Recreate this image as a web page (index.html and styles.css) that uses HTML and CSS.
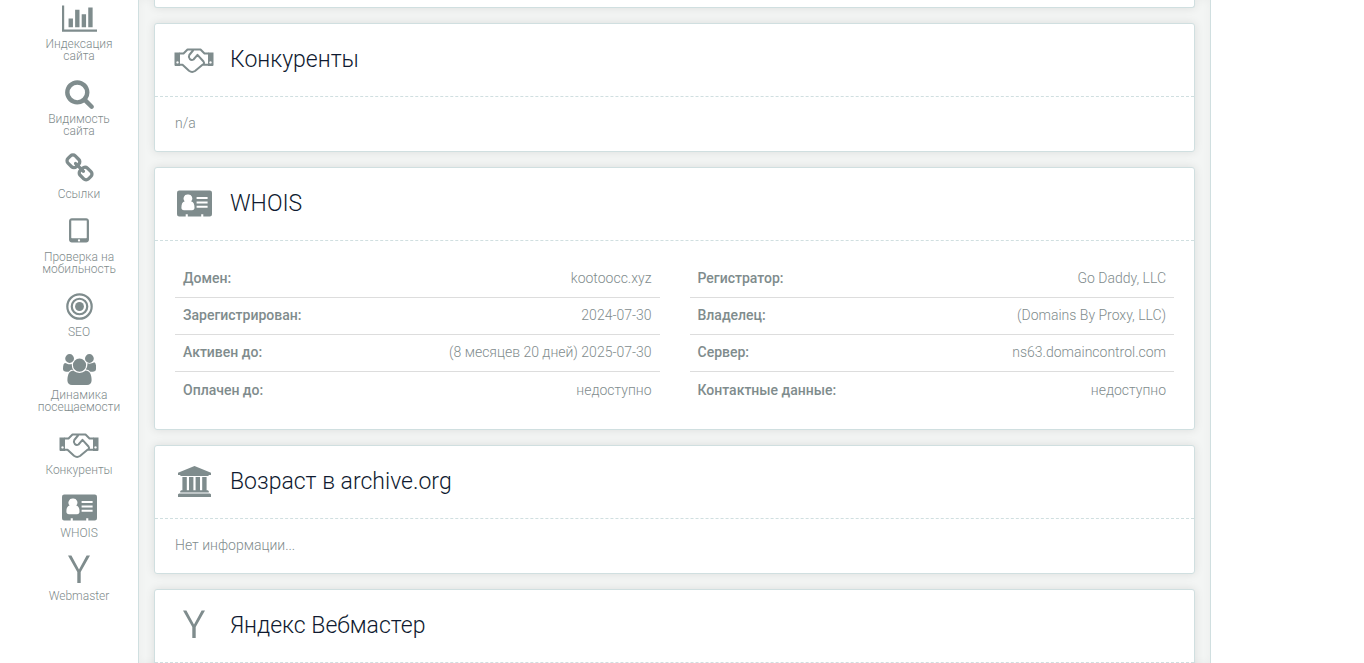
FILE: index.html
```html
<!DOCTYPE html>
<html lang="ru">
<head>
<meta charset="utf-8">
<title>WHOIS</title>
<link rel="stylesheet" href="styles.css">
</head>
<body>
<svg class="sprite" aria-hidden="true">
  <symbol id="i-chart" viewBox="0 0 2048 1792"><path d="M640 896v512h-256v-512h256zm384-512v1024h-256v-1024h256zm1024 1152v128h-2048v-1536h128v1408h1920zm-640-896v768h-256v-768h256zm384-384v1152h-256v-1152h256z"/></symbol>
  <symbol id="i-search" viewBox="64 0 1664 1792"><path d="M1216 832q0-185-131.5-316.5t-316.5-131.5-316.5 131.5-131.5 316.5 131.5 316.5 316.5 131.5 316.5-131.5 131.5-316.5zm512 832q0 52-38 90t-90 38q-54 0-90-38l-343-342q-179 124-399 124-143 0-273.5-55.5t-225-150-150-225-55.5-273.5 55.5-273.5 150-225 225-150 273.5-55.5 273.5 55.5 225 150 150 225 55.5 273.5q0 220-124 399l343 343q37 37 37 90z"/></symbol>
  <symbol id="i-chain" viewBox="64 0 1664 1792"><path d="M1520 1216q0-40-28-68l-208-208q-28-28-68-28-42 0-72 32 3 3 19 18.500t21.500 21.500 15 19 13 25.500 3.500 27.500q0 40-28 68t-68 28q-15 0-27.500-3.500t-25.500-13-19-15-21.500-21.500-18.500-19q-33 31-33 73 0 40 28 68l206 207q27 27 68 27 40 0 68-26l147-146q28-28 28-67zm-703-705q0-40-28-68l-206-207q-28-28-68-28-39 0-68 27l-147 146q-28 28-28 67 0 40 28 68l208 208q27 27 68 27 42 0 72-31-3-3-19-18.500t-21.500-21.500-15-19-13-25.500-3.500-27.500q0-40 28-68t68-28q15 0 27.500 3.500t25.500 13 19 15 21.500 21.500 18.500 19q33-31 33-73zm895 705q0 120-85 203l-147 146q-83 83-203 83-121 0-204-85l-206-207q-83-83-83-203 0-123 88-209l-88-88q-86 88-208 88-120 0-204-84l-208-208q-84-84-84-204t85-203l147-146q83-83 203-83 121 0 204 85l206 207q83 83 83 203 0 123-88 209l88 88q86-88 208-88 120 0 204 84l208 208q84 84 84 204z"/></symbol>
  <symbol id="i-tablet" viewBox="320 0 1152 1792"><path d="M960 1408q0-26-19-45t-45-19-45 19-19 45 19 45 45 19 45-19 19-45zm384-160v-960q0-13-9.500-22.500t-22.500-9.500h-832q-13 0-22.500 9.500t-9.500 22.500v960q0 13 9.500 22.500t22.500 9.500h832q13 0 22.500-9.500t9.500-22.500zm128-960v1088q0 66-47 113t-113 47h-832q-66 0-113-47t-47-113v-1088q0-66 47-113t113-47h832q66 0 113 47t47 113z"/></symbol>
  <symbol id="i-target" viewBox="0 0 1536 1792"><g fill="none" stroke="currentColor" stroke-width="128"><circle cx="768" cy="896" r="704"/><circle cx="768" cy="896" r="448"/></g><circle cx="768" cy="896" r="256"/></symbol>
  <symbol id="i-users" viewBox="0 0 1920 1792"><path d="M593 896q-162 5-265 128h-134q-82 0-138-40.500t-56-118.500q0-353 124-353 6 0 43.500 21t97.500 42.500 119 21.500q67 0 133-23-5 37-5 66 0 159 93 293zm1071 637q0 120-73 189.500t-194 69.500h-874q-121 0-194-69.500t-73-189.500q0-53 3.500-103.500t14-109 26.500-108.500 43-97.500 62-81 85.500-53.500 111.500-20q10 0 43 21.500t73 48 107 48 135 21.500 135-21.500 107-48 73-48 43-21.500q61 0 111.500 20t85.500 53.500 62 81 43 97.500 26.500 108.500 14 109 3.500 103.500zm-1024-1277q0 106-75 181t-181 75-181-75-75-181 75-181 181-75 181 75 75 181zm704 384q0 159-112.500 271.500t-271.500 112.500-271.500-112.500-112.500-271.500 112.500-271.500 271.500-112.500 271.500 112.500 112.500 271.500zm576 225q0 78-56 118.500t-138 40.500h-134q-103-123-265-128 93-134 93-293 0-29-5-66 66 23 133 23 59 0 119-21.500t97.500-42.500 43.500-21q124 0 124 353zm-128-609q0 106-75 181t-181 75-181-75-75-181 75-181 181-75 181 75 75 181z"/></symbol>
  <symbol id="i-hands" viewBox="0 0 40 31"><path fill-rule="evenodd" d="M.5 8.500H6V22H1.500Q.5 22 .5 21zM3.500 17.200a1.200 1.200 0 1 0 .01 0zM39.500 8.500H34V22h4.500q1 0 1-1zM36.500 17.200a1.200 1.200 0 1 0 .01 0z"/><g fill="none" stroke="currentColor" stroke-width="2" stroke-linejoin="round" stroke-linecap="round"><path d="M6 9.500H9.500L13.500 5.500H26.500L30.500 9.500H34M6 20.800H8.500L15 26.800Q18 29 21 27L28.500 20.800H34M28.500 20.800Q31 19.500 29.500 17.500L23.500 10.800L19.500 15.500Q17.500 16.800 15.800 15Q14.200 13 15.300 11L19 6.500"/></g></symbol>
  <symbol id="i-card" viewBox="0 0 35 31"><path fill-rule="evenodd" d="M2.200 2.500H32.800Q35 2.500 35 4.700V26.300Q35 28.500 32.800 28.500H26.300V26.300H24.200V28.500H10.800V26.300H8.700V28.500H2.200Q0 28.500 0 26.300V4.700Q0 2.500 2.200 2.500zM10.800 6.600a4 4 0 0 0-3.200 6.800Q4.400 14 4.400 19.500Q4.400 22.300 7 22.300H15Q17.500 22.300 17.500 19.500Q17.500 14 14.200 13.400A4 4 0 0 0 10.800 6.600zM19.600 9.100V11.100H30.600V9.100zM19.600 13.400V15.400H30.600V13.400zM19.600 17.700V19.700H30.600V17.700z"/></symbol>
  <symbol id="i-bank" viewBox="0 0 1920 1792"><path d="M960 0l960 384v128h-128q0 26-20.500 45t-48.500 19h-1526q-28 0-48.500-19t-20.500-45h-128v-128zm-704 640h256v768h128v-768h256v768h128v-768h256v768h128v-768h256v768h59q28 0 48.500 19t20.500 45v64h-1664v-64q0-26 20.500-45t48.500-19h59v-768zm1595 960q28 0 48.500 19t20.500 45v128h-1920v-128q0-26 20.500-45t48.500-19h1782z"/></symbol>
  <symbol id="i-y" viewBox="0 0 22 31"><path d="M0 .5H3.400L11 14.500L18.600 .5H22L12.700 17V28H9.300V17z"/></symbol>
</svg>
<div class="page">
  <nav class="side">
    <a class="side-link" href="#index"><svg class="icon w35"><use href="#i-chart"/></svg>Индексация сайта</a>
    <a class="side-link" href="#visibility"><svg class="icon w29"><use href="#i-search"/></svg>Видимость сайта</a>
    <a class="side-link" href="#links"><svg class="icon w29"><use href="#i-chain"/></svg>Ссылки</a>
    <a class="side-link" href="#mobile"><svg class="icon w20"><use href="#i-tablet"/></svg>Проверка на мобильность</a>
    <a class="side-link" href="#seo"><svg class="icon w27"><use href="#i-target"/></svg>SEO</a>
    <a class="side-link" href="#traffic"><svg class="icon w33"><use href="#i-users"/></svg>Динамика посещаемости</a>
    <a class="side-link" href="#rivals"><svg class="icon w40"><use href="#i-hands"/></svg>Конкуренты</a>
    <a class="side-link" href="#whois"><svg class="icon w35"><use href="#i-card"/></svg>WHOIS</a>
    <a class="side-link" href="#webmaster"><svg class="icon w22"><use href="#i-y"/></svg>Webmaster</a>
  </nav>
  <main class="content">
    <section class="card card-end"></section>
    <section class="card" id="rivals">
      <header class="card-head"><span class="card-icon"><svg class="icon w40"><use href="#i-hands"/></svg></span><h2 class="card-title">Конкуренты</h2></header>
      <div class="card-body">n/a</div>
    </section>
    <section class="card" id="whois">
      <header class="card-head"><span class="card-icon"><svg class="icon w35"><use href="#i-card"/></svg></span><h2 class="card-title">WHOIS</h2></header>
      <div class="card-body columns">
        <table class="facts">
          <tr><th scope="row">Домен:</th><td>kootoocc.xyz</td></tr>
          <tr><th scope="row">Зарегистрирован:</th><td>2024-07-30</td></tr>
          <tr><th scope="row">Активен до:</th><td>(8 месяцев 20 дней) 2025-07-30</td></tr>
          <tr><th scope="row">Оплачен до:</th><td>недоступно</td></tr>
        </table>
        <table class="facts">
          <tr><th scope="row">Регистратор:</th><td>Go Daddy, LLC</td></tr>
          <tr><th scope="row">Владелец:</th><td>(Domains By Proxy, LLC)</td></tr>
          <tr><th scope="row">Сервер:</th><td>ns63.domaincontrol.com</td></tr>
          <tr><th scope="row">Контактные данные:</th><td>недоступно</td></tr>
        </table>
      </div>
    </section>
    <section class="card" id="archive">
      <header class="card-head"><span class="card-icon"><svg class="icon w33"><use href="#i-bank"/></svg></span><h2 class="card-title">Возраст в archive.org</h2></header>
      <div class="card-body">Нет информации...</div>
    </section>
    <section class="card" id="webmaster">
      <header class="card-head"><span class="card-icon"><svg class="icon w22"><use href="#i-y"/></svg></span><h2 class="card-title">Яндекс Вебмастер</h2></header>
      <div class="card-body"></div>
    </section>
  </main>
</div>
</body>
</html>
```

FILE: styles.css
```css
* { box-sizing: border-box; }

body {
  margin: 0;
  background: #fff;
  color: #7f8c8d;
  font: 300 14px/14px Roboto, "Open Sans", sans-serif;
}

.sprite { position: absolute; width: 0; height: 0; }

.page {
  display: grid;
  grid-template-columns: 138px 1fr;
  height: 100vh;
  padding-right: 153px;
  overflow: hidden;
}

.side {
  display: flex;
  flex-direction: column;
  gap: 16px;
  padding: 3px 14px 0 34px;
}

.side-link {
  display: flex;
  flex-direction: column;
  align-items: center;
  gap: 4px;
  color: #7f8c8d;
  font-size: 12px;
  line-height: 12px;
  text-align: center;
  text-decoration: none;
}

.icon { display: block; height: 31px; fill: currentColor; flex: none; }
.w20 { width: 20px; }
.w22 { width: 22px; }
.w27 { width: 27px; }
.w29 { width: 29px; }
.w33 { width: 33px; }
.w35 { width: 35px; }
.w40 { width: 40px; }

.content {
  display: flex;
  flex-direction: column;
  gap: 15px;
  padding: 0 15px;
  background: #f3f5f4;
  border: solid #d0dfe0;
  border-width: 0 1px;
  box-shadow: inset 0 0 8px rgba(0, 0, 0, .04);
  overflow: hidden;
}

.card {
  flex: none;
  background: #fff;
  border: 1px solid #d0dfe0;
  border-radius: 3px;
  box-shadow: 0 0 10px rgba(0, 0, 0, .1);
}

.card-end { height: 8px; border-top: 0; border-radius: 0 0 3px 3px; }

.card-head {
  display: flex;
  align-items: center;
  gap: 17px;
  height: 73px;
  padding: 0 20px;
  border-bottom: 1px dashed #d0dfe0;
}

.card-icon {
  display: flex;
  justify-content: center;
  width: 38px;
  padding-bottom: 2px;
}

.card-title {
  margin: 0;
  color: #0f1a30;
  font-size: 23px;
  font-weight: 300;
  line-height: 24px;
}

.card-body { padding: 19px 20px 21px; }

.columns {
  display: grid;
  grid-template-columns: 1fr 1fr;
  gap: 30px;
  padding: 20px;
}

.facts { width: 100%; border-collapse: separate; border-spacing: 0; }
.facts th, .facts td { height: 37px; padding: 0 8px 2px; border-bottom: 1px solid #ddd; }
.facts tr:last-child th, .facts tr:last-child td { border-bottom: 0; }
.facts th { font-weight: 500; text-align: left; }
.facts td { text-align: right; }
```
